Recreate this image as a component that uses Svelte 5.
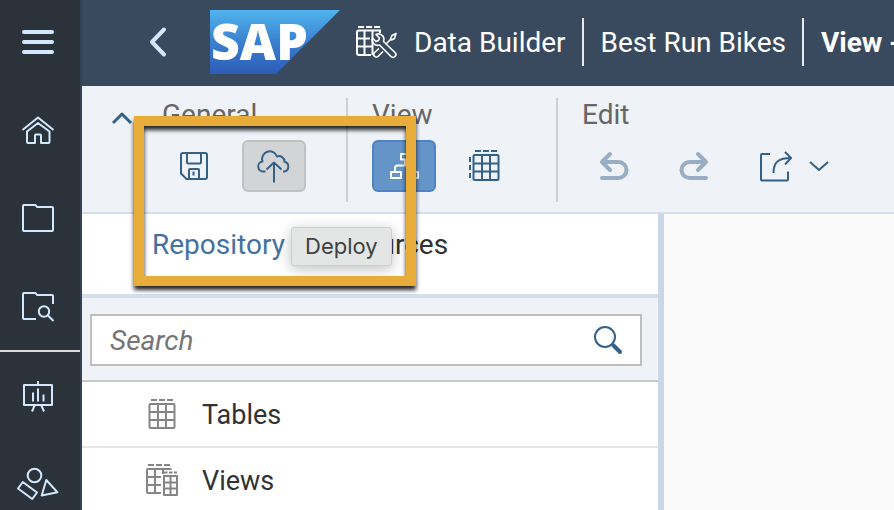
<script>
  let query = $state('');
  let activeTab = $state('repository');
</script>

<div class="app">
  <nav class="rail" aria-label="Main">
    <button class="menu" aria-label="Menu">
      <svg viewBox="0 0 44 44" stroke-width="4" stroke-linecap="round"><path d="M8 11H36M8 21H36M8 31H36" /></svg>
    </button>
    <button aria-label="Home">
      <svg viewBox="0 0 44 44"><path d="M6.500 22 22 9.500 37.500 22M11 23.500V34a1 1 0 0 0 1 1H19V27.500a1 1 0 0 1 1-1H24a1 1 0 0 1 1 1V35H32.500a1 1 0 0 0 1-1V23.500L22 15Z" /></svg>
    </button>
    <button aria-label="Files">
      <svg viewBox="0 0 44 44"><path d="M8 9H19.500L21 11H36a1 1 0 0 1 1 1V34a1 1 0 0 1-1 1H8a1 1 0 0 1-1-1V10a1 1 0 0 1 1-1Z" /></svg>
    </button>
    <button aria-label="Explore">
      <svg viewBox="0 0 44 44"><path d="M20 35H8a1 1 0 0 1-1-1V10a1 1 0 0 1 1-1H19.500L21 11H36a1 1 0 0 1 1 1V20M32 31.500 37.500 37" /><circle cx="28" cy="27.500" r="5.200" /></svg>
    </button>
    <hr />
    <button aria-label="Stories">
      <svg viewBox="0 0 44 44"><path d="M8 11H36V31H8ZM22 7V11M17 18.500V27.500M22 14.500V27.500M27.500 20.500V27.500M18.800 31 16 37.500M25.200 31 28 37.500" /></svg>
    </button>
    <button aria-label="Applications">
      <svg viewBox="0 0 44 44"><circle cx="18.500" cy="13.500" r="6.800" /><path d="M6.800 20 21 30.500 16.300 37 2 26.500ZM30.300 18 41.500 30.300 25.700 33.500Z" /></svg>
    </button>
  </nav>

  <div class="main">
    <header>
      <button class="back" aria-label="Back">
        <svg viewBox="0 0 24 32"><path d="M18 3.500 6 16 18 28.500" /></svg>
      </button>
      <svg class="logo" viewBox="0 0 130 64" role="img" aria-label="SAP">
        <defs>
          <linearGradient id="sapBlue" x1="0" y1="0" x2="0" y2="1">
            <stop offset="0" stop-color="#50b5ec" />
            <stop offset=".5" stop-color="#3a80d0" />
            <stop offset="1" stop-color="#2e5cb7" />
          </linearGradient>
        </defs>
        <path d="M0 0H130L66 64H0Z" fill="url(#sapBlue)" />
        <text x="1" y="50">SAP</text>
      </svg>
      <svg class="builder" viewBox="0 0 44 36">
        <path d="M3 3H9M11 3H17M19 3H25M26 6.500H4a2 2 0 0 0-2 2V29a2 2 0 0 0 2 2H16M9.500 7V31M17.500 7V31M25 6.500V9M2 14.500H15M2 22.500H18" />
        <path stroke-width="1.600" d="M21 10.500 24.500 14 23.500 16.500 21 17.500 17.500 14A5.500 5.500 0 0 0 24.500 21L36 32.500A2.800 2.800 0 0 0 40 28.500L28.500 17.500A5.500 5.500 0 0 0 21 10.500ZM41 9.500 37 11.500 35.500 15 36.500 16 39.500 14.500ZM35.500 15.500 31.500 19.500M24 24.500 19.500 28.500A2.600 2.600 0 0 0 23.300 32.300L28 27.500" />
      </svg>
      <span class="crumb first">Data Builder</span>
      <span class="crumb">Best Run Bikes</span>
      <span class="crumb current">View -</span>
    </header>

    <div class="toolbar">
      <button class="collapse" aria-label="Collapse toolbar">
        <svg viewBox="0 0 24 16"><path d="M3 13 12 4 21 13" /></svg>
      </button>
      <section class="group">
        <h2>General</h2>
        <div class="tools">
          <button aria-label="Save">
            <svg viewBox="0 0 36 36"><path d="M7 5H29a2 2 0 0 1 2 2V29a2 2 0 0 1-2 2H10.500L5 25.500V7a2 2 0 0 1 2-2ZM11 5V14.500a1 1 0 0 0 1 1H24a1 1 0 0 0 1-1V5M13 31V22a1 1 0 0 1 1-1H22a1 1 0 0 1 1 1V31M17.500 23.500V27.500" /></svg>
          </button>
          <button class="hovered" aria-label="Deploy">
            <svg viewBox="0 0 36 36"><path d="M9.500 23.500H8A5 5 0 0 1 6.500 13.500A7.500 7.500 0 0 1 21 8.500A5.500 5.500 0 0 1 28.500 13.800A5 5 0 0 1 28.500 23.500H27M18 34.500V15M10.500 21.500 18 14.500 25.500 21.500" /></svg>
          </button>
        </div>
      </section>
      <section class="group">
        <h2>View</h2>
        <div class="tools">
          <button class="pressed" aria-label="Diagram" aria-pressed="true">
            <svg viewBox="0 0 36 36"><path d="M15 6H23.500V11.500H15ZM5 24H15V30H5ZM23 24H32V30H23ZM19 11.500V17.500M9 24V20a2.500 2.500 0 0 1 2.500-2.500H25.500a2.500 2.500 0 0 1 2.500 2.500V24" /></svg>
          </button>
          <button aria-label="Data preview">
            <svg viewBox="0 0 36 36"><path d="M8.500 7H31.500a1 1 0 0 1 1 1V31a1 1 0 0 1-1 1H8.500a1 1 0 0 1-1-1V8a1 1 0 0 1 1-1ZM16 7V32M24 7V32M8 15.500H32M8 23.500H32M9 3H15M17 3H23M25 3H31M4 9V14M4 17V22M4 25V30" /></svg>
          </button>
        </div>
      </section>
      <section class="group">
        <h2>Edit</h2>
        <div class="tools">
          <button aria-label="Undo" disabled>
            <svg viewBox="0 0 36 36" stroke-width="4"><path d="M14 6 6 14 14 22M6 14H22.500a8 8 0 0 1 0 16H6" /></svg>
          </button>
          <button aria-label="Redo" disabled>
            <svg viewBox="0 0 36 36" stroke-width="4"><path d="M22 6 30 14 22 22M30 14H13.500a8 8 0 0 0 0 16H30" /></svg>
          </button>
          <button aria-label="Share">
            <svg viewBox="0 0 36 36"><path d="M14 6H6a1 1 0 0 0-1 1V31.500a1 1 0 0 0 1 1H31a1 1 0 0 0 1-1V23.500M17.500 25C17.500 13.500 23 10 35 10M29 4 35 10 29 16.500" /></svg>
          </button>
          <button class="more" aria-label="Share options">
            <svg viewBox="0 0 24 16"><path d="M4 4 13 12 22 4" /></svg>
          </button>
        </div>
      </section>
    </div>

    <div class="body">
      <aside>
        <div class="tabs" role="tablist">
          <button role="tab" aria-selected={activeTab === 'repository'} onclick={() => (activeTab = 'repository')}>Repository</button>
          <button role="tab" aria-selected={activeTab === 'sources'} onclick={() => (activeTab = 'sources')}>Sources</button>
          <div class="tooltip" role="tooltip">Deploy</div>
        </div>
        <div class="finder">
          <label class="field">
            <input type="text" placeholder="Search" aria-label="Search" bind:value={query} />
            <svg viewBox="0 0 36 36"><circle cx="15" cy="15" r="10" /><path stroke-width="4" stroke-linecap="round" d="M23.500 23.500 30 30" /></svg>
          </label>
        </div>
        <ul>
          <li>
            <svg viewBox="0 0 36 36"><path d="M6.500 8H29.500a1 1 0 0 1 1 1V31a1 1 0 0 1-1 1H6.500a1 1 0 0 1-1-1V9a1 1 0 0 1 1-1ZM14 8V32M22 8V32M6 16H30M6 24H30M7 4H13M15 4H21M23 4H29" /></svg>
            <span>Tables</span>
          </li>
          <li>
            <svg viewBox="0 0 36 36"><path d="M17 31H4a1 1 0 0 1-1-1V8a1 1 0 0 1 1-1H26a1 1 0 0 1 1 1M11 7V31M19 7V12M3 15H17M3 23H17M4 3H10M12 3H18M20 3H26M20 14H33V33H20ZM26.500 14V33M20 20.500H33M20 26.500H33M20 10.500H23.500M25 10.500H28.500M30 10.500H33" /></svg>
            <span>Views</span>
          </li>
        </ul>
      </aside>
      <main></main>
    </div>
  </div>

  <div class="callout"></div>
</div>

<style>
  :global(body) { margin: 0; background: #fafafa; }
  * { box-sizing: border-box; }
  .app {
    position: relative;
    display: flex;
    height: 100vh;
    overflow: hidden;
    font-family: Roboto, 'Open Sans', sans-serif;
    font-size: 28px;
    line-height: 38px;
    color: #323232;
  }
  button { display: block; padding: 0; border: 0; background: none; font: inherit; color: inherit; }
  svg { display: block; flex: none; fill: none; stroke: currentColor; stroke-width: 2; stroke-linejoin: round; }
  svg[stroke-width] { stroke-width: 4; stroke-linecap: round; }

  .rail { flex: none; width: 82px; background: #2c323a; border-right: 2px solid #354255; color: #d1e8ff; }
  .rail button { width: 80px; height: 88px; padding-left: 16px; }
  .rail .menu { height: 86px; }
  .rail svg { width: 44px; height: 44px; }
  .rail hr { height: 2px; margin: 0; border: 0; background: #d9d9d9; }

  .main { flex: 1; min-width: 0; display: flex; flex-direction: column; }
  header { display: flex; align-items: center; flex: none; height: 86px; padding: 0 0 2px 64px; background: #394a5f; color: #fff; white-space: nowrap; overflow: hidden; }
  .back { margin-right: 40px; color: #d1e8ff; }
  .back svg { width: 24px; height: 32px; stroke-width: 4; stroke-linecap: round; }
  .logo { width: 130px; height: 64px; margin-right: 15px; stroke: none; overflow: visible; }
  .logo text { font: 800 50px 'Open Sans', sans-serif; fill: #fff; }
  .builder { width: 44px; height: 36px; margin-right: 15px; }
  .crumb { height: 48px; padding: 0 16px 0 17px; line-height: 50px; border-left: 2px solid #e8ebee; }
  .crumb.first { padding-left: 0; border-left: 0; }
  .current { font-weight: 700; }

  .toolbar { display: flex; flex: none; height: 128px; padding: 12px 0 10px 28px; background: #eff3f8; border-bottom: 2px solid #d3dfed; color: #346187; }
  .collapse { height: 40px; margin-right: 28px; }
  .collapse svg { width: 24px; height: 16px; stroke-width: 3; }
  .group { padding-right: 40px; }
  .group + .group { padding-left: 24px; border-left: 2px solid #cdd1d6; }
  .group:last-child { padding-right: 0; }
  h2 { height: 42px; margin: 0; font-size: 28px; font-weight: 400; line-height: 34px; color: #666; }
  .tools { display: flex; gap: 16px; }
  .tools button { display: flex; align-items: center; justify-content: center; width: 64px; height: 52px; border: 2px solid transparent; border-radius: 6px; }
  .tools svg { width: 36px; height: 36px; }
  .tools .hovered { background: #d2d4d6; border-color: #c0c1c3; }
  .tools .pressed { background: #6594c9; border-color: #4f84c4; color: #fff; }
  .tools button:disabled { color: #9aaec3; }
  .tools .more { width: 32px; margin-left: -20px; }
  .tools .more svg { width: 24px; height: 16px; }

  .body { flex: 1; min-height: 0; display: flex; }
  aside { flex: none; width: 71.7%; border-right: 6px solid #cbd7e6; background: #fff; }
  .tabs { position: relative; display: flex; gap: 62px; height: 84px; padding: 12px 0 30px 70px; border-bottom: 4px solid #d3dfed; }
  .tabs button[aria-selected='true'] { color: #44719f; }
  .tooltip { position: absolute; top: 13px; left: 209px; padding: 0 13px; font: 22px/37px Inter, sans-serif; color: #404040; background: #e4e6e5; border: 1px solid #cfcfcf; border-radius: 3px; box-shadow: 0 3px 14px rgba(0, 0, 0, 0.25); }
  .finder { padding: 16px 16px 14px 8px; background: #eff3f8; border-bottom: 2px solid #c7c9cb; }
  .field { display: flex; align-items: center; height: 52px; padding: 0 14px 0 18px; background: #fff; border: 2px solid #bfbfbf; color: #346187; }
  .field svg { width: 36px; height: 36px; }
  input { flex: 1; min-width: 0; height: 38px; padding: 2px 0 0; border: 0; outline: 0; background: none; font: inherit; color: #323232; }
  input::placeholder { font-style: italic; color: #757575; opacity: 1; }
  ul { margin: 0; padding: 0; list-style: none; }
  li { display: flex; align-items: center; gap: 22px; height: 66px; padding-left: 62px; border-bottom: 2px solid #e4e4e4; font-size: 27px; }
  li span { padding-top: 2px; }
  li svg { width: 36px; height: 36px; color: #858585; }

  .callout { position: absolute; top: 116px; left: 134px; width: 282px; height: 170px; border: 10px solid #e8ac3a; filter: drop-shadow(0 4px 2px rgba(0, 0, 0, 0.85)); pointer-events: none; }
</style>
